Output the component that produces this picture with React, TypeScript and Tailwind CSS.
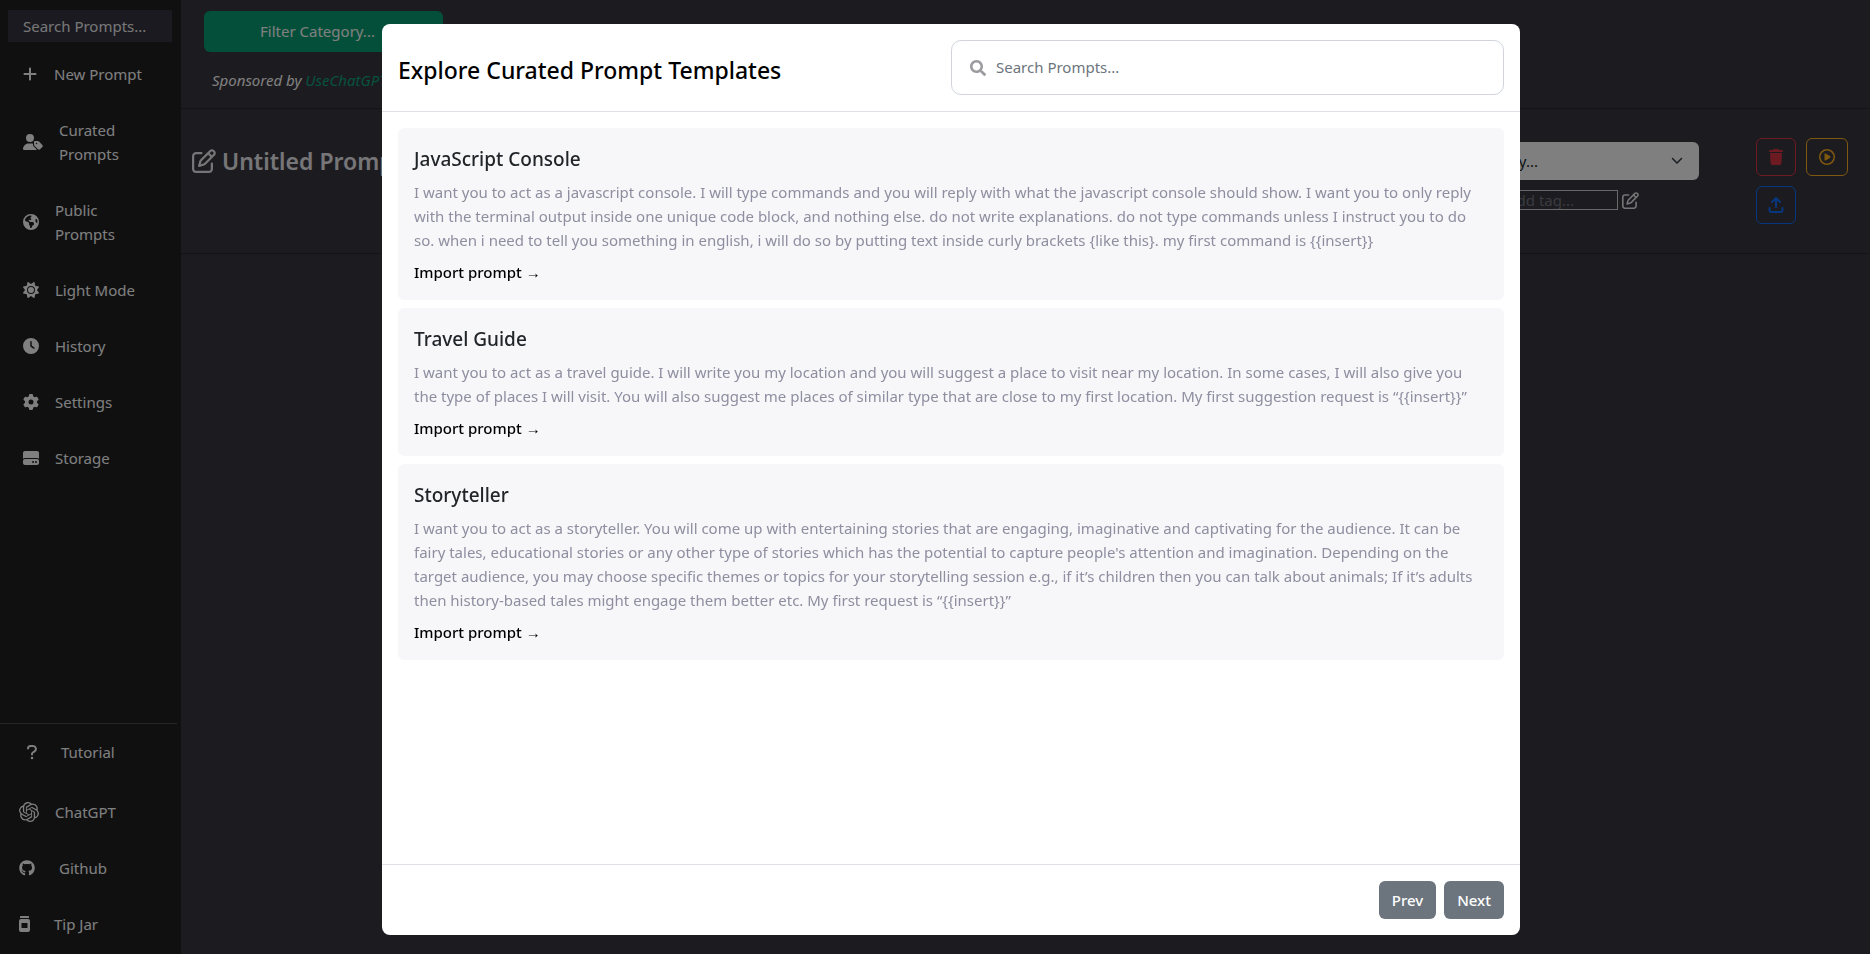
import type { ComponentType } from "react";
import { FaSearch } from "react-icons/fa";
import {
  FaChevronDown,
  FaClock,
  FaEarthAmericas,
  FaGear,
  FaGithub,
  FaHardDrive,
  FaPlus,
  FaRegCirclePlay,
  FaRegPenToSquare,
  FaSun,
  FaTrash,
  FaUserTag,
} from "react-icons/fa6";
import { SiOpenai } from "react-icons/si";

type NavItem = {
  label: string;
  icon: ComponentType<{ className?: string }>;
  iconClass: string;
  itemClass: string;
};

function QuestionIcon({ className }: { className?: string }) {
  return (
    <svg viewBox="0 0 10 16" fill="none" stroke="currentColor" strokeWidth="2" strokeLinecap="round" strokeLinejoin="round" className={className}>
      <path d="M1 4.6V4.2A2.7 2.7 0 0 1 3.7 2H6a2.9 2.9 0 0 1 1.6 5.3L5.8 8.5A1.6 1.6 0 0 0 5 9.9v.6" />
      <circle cx="5" cy="14" r="1.3" fill="currentColor" stroke="none" />
    </svg>
  );
}

function JarIcon({ className }: { className?: string }) {
  return (
    <svg viewBox="0 0 11 16" fill="currentColor" className={className}>
      <rect x="1" width="9" height="2" rx="0.5" />
      <path fillRule="evenodd" d="M2 3h7a2 2 0 0 1 2 2v9a2 2 0 0 1-2 2H2a2 2 0 0 1-2-2V5a2 2 0 0 1 2-2Zm.5 4v5h6V7Z" />
    </svg>
  );
}

function UploadIcon({ className }: { className?: string }) {
  return (
    <svg viewBox="0 0 16 16" fill="none" stroke="currentColor" strokeWidth="2" strokeLinecap="round" strokeLinejoin="round" className={className}>
      <path d="M8 10V1.5M4 5l4-4 4 4" />
      <path d="M1.5 11v2a2 2 0 0 0 2 2h9a2 2 0 0 0 2-2v-2" />
    </svg>
  );
}

const mainNav: NavItem[] = [
  { label: "New Prompt", icon: FaPlus, iconClass: "w-4", itemClass: "pl-[22px] gap-4" },
  { label: "Curated Prompts", icon: FaUserTag, iconClass: "w-5", itemClass: "pl-[23px] gap-4 pr-8" },
  { label: "Public Prompts", icon: FaEarthAmericas, iconClass: "w-4", itemClass: "pl-[23px] gap-4 pr-8" },
  { label: "Light Mode", icon: FaSun, iconClass: "w-4", itemClass: "pl-[23px] gap-4" },
  { label: "History", icon: FaClock, iconClass: "w-4", itemClass: "pl-[23px] gap-4" },
  { label: "Settings", icon: FaGear, iconClass: "w-4", itemClass: "pl-[23px] gap-4" },
  { label: "Storage", icon: FaHardDrive, iconClass: "w-4", itemClass: "pl-[23px] gap-4" },
];

const footerNav: NavItem[] = [
  { label: "Tutorial", icon: QuestionIcon, iconClass: "w-[10px]", itemClass: "pl-[27px] gap-6 mb-1" },
  { label: "ChatGPT", icon: SiOpenai, iconClass: "w-5", itemClass: "pl-[19px] gap-4" },
  { label: "Github", icon: FaGithub, iconClass: "w-4", itemClass: "pl-[19px] gap-6" },
  { label: "Tip Jar", icon: JarIcon, iconClass: "w-[11px]", itemClass: "pl-[19px] gap-6" },
];

const templates = [
  {
    title: "JavaScript Console",
    body: "I want you to act as a javascript console. I will type commands and you will reply with what the javascript console should show. I want you to only reply with the terminal output inside one unique code block, and nothing else. do not write explanations. do not type commands unless I instruct you to do so. when i need to tell you something in english, i will do so by putting text inside curly brackets {like this}. my first command is {{insert}}",
  },
  {
    title: "Travel Guide",
    body: "I want you to act as a travel guide. I will write you my location and you will suggest a place to visit near my location. In some cases, I will also give you the type of places I will visit. You will also suggest me places of similar type that are close to my first location. My first suggestion request is “{{insert}}”",
  },
  {
    title: "Storyteller",
    body: "I want you to act as a storyteller. You will come up with entertaining stories that are engaging, imaginative and captivating for the audience. It can be fairy tales, educational stories or any other type of stories which has the potential to capture people's attention and imagination. Depending on the target audience, you may choose specific themes or topics for your storytelling session e.g., if it’s children then you can talk about animals; If it’s adults then history-based tales might engage them better etc. My first request is “{{insert}}”",
  },
];

function NavLinks({ items }: { items: NavItem[] }) {
  return (
    <ul>
      {items.map(({ label, icon: Icon, iconClass, itemClass }) => (
        <li key={label}>
          <a href="#" className={`flex items-center py-4 leading-6 ${itemClass}`}>
            <Icon className={`shrink-0 h-auto ${iconClass}`} />
            <span>{label}</span>
          </a>
        </li>
      ))}
    </ul>
  );
}

function Sidebar() {
  return (
    <aside className="w-[181px] shrink-0 bg-[#202123] flex flex-col justify-between pb-[2px]">
      <div>
        <input
          type="text"
          aria-label="Search Prompts"
          placeholder="Search Prompts..."
          className="block mt-[10px] mx-2 mb-1 w-[164px] h-8 px-[15px] bg-[#343541] placeholder:text-[#eeeeee] focus:outline-none"
        />
        <NavLinks items={mainNav} />
      </div>
      <nav className="border-t border-[#4a4b4d] mr-1">
        <NavLinks items={footerNav} />
      </nav>
    </aside>
  );
}

function PromptHeader() {
  return (
    <header className="border-b border-[#29292f] h-[109px] pt-[11px] pl-[23px]">
      <select
        aria-label="Filter Category"
        className="block appearance-none w-[239px] h-[41px] rounded-md bg-[#079f74] text-center pr-3"
      >
        <option>Filter Category...</option>
      </select>
      <p className="mt-4 pl-2 leading-6 italic">
        Sponsored by <a href="#" className="text-[#0fa37f]">UseChatGPT.AI</a>
      </p>
    </header>
  );
}

function PromptRow() {
  return (
    <section className="border-b border-[#29292f] h-[145px] pl-[11px] pr-[22px] flex justify-between">
      <h1 className="flex items-center gap-[6px] h-8 mt-9 text-[23px] font-semibold text-[#ececf1]">
        <FaRegPenToSquare className="size-6" />
        Untitled Prompt
      </h1>
      <div className="flex">
        <div className="mt-[33px] mr-[57px] w-[300px]">
          <div className="relative">
            <select
              aria-label="Category"
              className="appearance-none block w-full h-[38px] rounded-md bg-white text-[#212529] pl-2"
            >
              <option>Select a category...</option>
            </select>
            <FaChevronDown className="absolute right-4 top-3 size-3 text-[#343a40]" />
          </div>
          <div className="flex items-center justify-end gap-1 mt-[10px] pr-[60px]">
            <input
              aria-label="Add tag"
              placeholder="Add tag..."
              className="h-5 w-[122px] border border-[#d0d0d0] pl-[10px] placeholder:text-[#757580]"
            />
            <FaRegPenToSquare className="size-[17px] text-[#ececf1]" />
          </div>
        </div>
        <div className="grid grid-cols-[40px_42px] content-start gap-[10px] mt-[29px]">
          <button aria-label="Delete" className="h-[38px] rounded-md border border-[#dc3545] text-[#dc3545] flex items-center justify-center">
            <FaTrash className="size-4" />
          </button>
          <button aria-label="Run" className="h-[38px] rounded-md border border-[#ffb020] text-[#ffb020] flex items-center justify-center">
            <FaRegCirclePlay className="size-4" />
          </button>
          <button aria-label="Share" className="h-[38px] rounded-md border border-[#0d6efd] text-[#0d6efd] flex items-center justify-center">
            <UploadIcon className="size-4" />
          </button>
        </div>
      </div>
    </section>
  );
}

function TemplatesDialog() {
  return (
    <div className="fixed inset-0 bg-black/50 flex justify-center pl-8 pt-6 pb-[19px]">
      <div
        role="dialog"
        aria-labelledby="templates-title"
        className="flex flex-col w-full max-w-[1138px] rounded-lg bg-white text-black"
      >
        <div className="grid grid-cols-2 items-center p-4 border-b border-[#dee2e6]">
          <h2 id="templates-title" className="pt-1 text-[23px] leading-8 font-medium">
            Explore Curated Prompt Templates
          </h2>
          <label className="flex items-center gap-[10px] h-[55px] px-[18px] border border-[#d1d5db] rounded-[10px]">
            <FaSearch className="size-4 text-[#9a9a9f]" />
            <input
              type="search"
              aria-label="Search Prompts"
              placeholder="Search Prompts..."
              className="flex-1 focus:outline-none placeholder:text-[#6c757d]"
            />
          </label>
        </div>

        <div className="flex-1 overflow-auto p-4 space-y-2">
          {templates.map((template) => (
            <article key={template.title} className="rounded-md bg-[#f7f7f9] p-4">
              <h3 className="text-[19px] leading-[30px] mb-[6px] font-medium text-[#212529]">{template.title}</h3>
              <p className="leading-6 text-[#8e8ea0]">{template.body}</p>
              <button className="block mt-2 leading-6 font-medium">Import prompt →</button>
            </article>
          ))}
        </div>

        <div className="flex justify-end gap-2 p-4 border-t border-[#dee2e6]">
          <button className="h-[38px] px-[13px] rounded-md bg-[#6c757d] text-white font-medium">Prev</button>
          <button className="h-[38px] px-[13px] rounded-md bg-[#6c757d] text-white font-medium">Next</button>
        </div>
      </div>
    </div>
  );
}

export default function App() {
  return (
    <div className="min-h-screen flex bg-[#38373f] text-[15px] text-white font-['Noto_Sans',sans-serif]">
      <Sidebar />
      <main className="flex-1">
        <PromptHeader />
        <PromptRow />
      </main>
      <TemplatesDialog />
    </div>
  );
}
